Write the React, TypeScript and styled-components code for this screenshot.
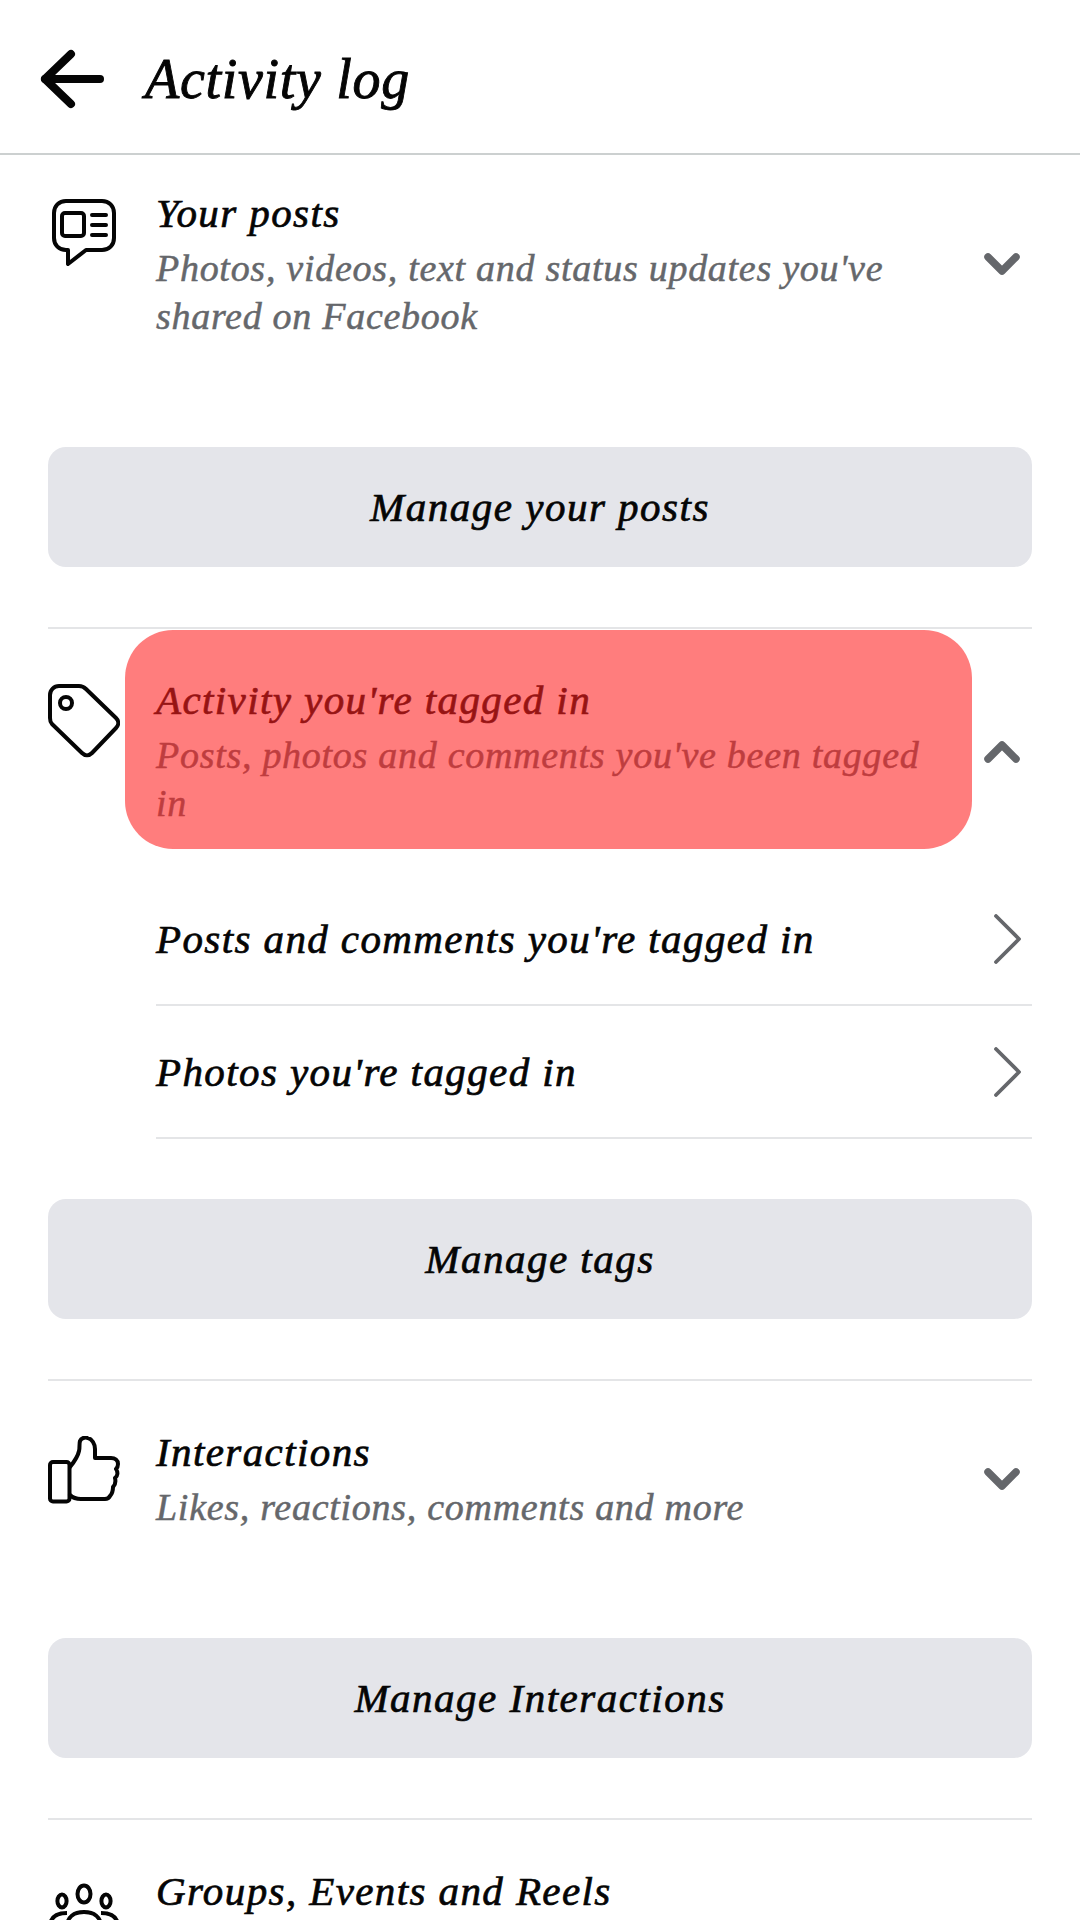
import styled, { createGlobalStyle } from "styled-components";

const GlobalStyle = createGlobalStyle`
    html, body {
        margin: 0;
        padding: 0;
        background: #fff;
    }

    * {
        box-sizing: border-box;
    }
`

const Page = styled.div`
    width: 1080px;
    height: 1920px;
    overflow: hidden;
    background: #fff;
    font-family: "Liberation Serif", serif;
    font-style: italic;
    color: #050505;
`

const Header = styled.header`
    display: flex;
    align-items: center;
    height: 155px;
    padding: 4px 0 0 40px;
    gap: 41px;
    border-bottom: 2px solid #ccd0d0;

    h1 {
        margin: 0;
        font-size: 56px;
        font-weight: 400;
        letter-spacing: 0.7px;
        -webkit-text-stroke: 0.9px #050505;
    }
`

const Section = styled.section<{ $first?: boolean; $last?: boolean }>`
    position: relative;
    margin: 0 48px;
    padding: ${(p) => (p.$first ? "31px" : "44px")} 0 60px;
    border-bottom: ${(p) => (p.$last ? "none" : "2px solid #e4e5e7")};
`

const Head = styled.div<{ $open?: boolean }>`
    display: flex;
    align-items: flex-start;
    margin-bottom: ${(p) => (p.$open ? "46px" : "107px")};
`

const IconSlot = styled.div<{ $dx?: number; $dy?: number }>`
    flex: 0 0 108px;
    height: 70px;
    padding-top: ${(p) => 11 + (p.$dy ?? 0)}px;
    padding-left: ${(p) => p.$dx ?? 0}px;
    line-height: 0;
`

const HeadText = styled.div`
    flex: 1;
    min-width: 0;
`

const Title = styled.div`
    height: 54px;
    line-height: 54px;
    font-size: 41px;
    letter-spacing: 1.4px;
    white-space: nowrap;
    -webkit-text-stroke: 0.7px #050505;
`

const Sub = styled.div`
    width: 790px;
    margin-top: 4px;
    font-size: 38px;
    line-height: 48px;
    letter-spacing: 0.72px;
    color: #65676b;
    -webkit-text-stroke: 0.5px #65676b;
`

const ChevronSlot = styled.div`
    align-self: center;
    flex: 0 0 48px;
    margin: 2px 0 0 -26px;
    line-height: 0;
`

const Rows = styled.div`
    margin-left: 108px;
    margin-bottom: 60px;
`

const Row = styled.div`
    display: flex;
    align-items: center;
    justify-content: space-between;
    height: 133px;
    padding-right: 11px;
    border-bottom: 2px solid #e4e5e7;
    font-size: 41px;
    letter-spacing: 1.4px;
    -webkit-text-stroke: 0.7px #050505;
`

const ManageButton = styled.div`
    display: flex;
    align-items: center;
    justify-content: center;
    height: 120px;
    border-radius: 18px;
    background: #e4e5ea;
    font-size: 41px;
    letter-spacing: 1.5px;
    -webkit-text-stroke: 0.7px #050505;
`

// red highlight laid over the tagged section heading
const Highlight = styled.div`
    position: absolute;
    top: 1px;
    left: 77px;
    width: 847px;
    height: 219px;
    border-radius: 48px;
    background: rgba(255, 31, 31, 0.58);
`

const ArrowBack = () => (
    <svg width="64" height="60" viewBox="0 0 64 60" fill="none" stroke="#050505" strokeWidth="8" strokeLinecap="round" strokeLinejoin="round">
        <path d="M5 30H60" />
        <path d="M31 5L5 30L31 55" />
    </svg>
)

const PostsIcon = () => (
    <svg width="66" height="70" viewBox="0 0 66 70" fill="none" stroke="#050505" strokeWidth="4" strokeLinecap="round" strokeLinejoin="round">
        <path d="M14 2H50C57 2 62 7 62 14V39C62 46 57 51 50 51H34L16 65V51H14C7 51 2 46 2 39V14C2 7 7 2 14 2Z" />
        <rect x="10" y="14" width="22" height="23" rx="3" />
        <path d="M40 16H54M40 26H54M40 36H54" />
    </svg>
)

const TagIcon = () => (
    <svg width="72" height="74" viewBox="0 0 72 74" fill="none" stroke="#050505" strokeWidth="4" strokeLinejoin="round">
        <path d="M11 2H31C34 2 36 3 38 5L68 34C71 37 71 41 68 44L44 69C41 72 37 72 34 69L4 40C2 38 2 36 2 34V11C2 6 6 2 11 2Z" />
        <circle cx="18" cy="19" r="6" />
    </svg>
)

const ThumbIcon = () => (
    <svg width="72" height="68" viewBox="0 0 72 68" fill="none" stroke="#050505" strokeWidth="4" strokeLinejoin="round" strokeLinecap="round">
        <rect x="2" y="26" width="19.5" height="39.5" rx="3" />
        <path d="M22 31C26 26 30 20 31 15C32 11 31 8 32 5C33 2 37 1 40 2C44 3 47 8 47 13V22H63C67 22 70 24 70 28C70 31 69 32 68 33C70 36 70 40 67 42C68 46 67 49 65 51C65 55 64 58 62 60C61 62 60 63 57 63H33C29 63 25 62 22 59" />
    </svg>
)

const GroupIcon = () => (
    <svg width="72" height="60" viewBox="0 0 72 60" fill="none" stroke="#050505" strokeWidth="4">
        <ellipse cx="14" cy="18" rx="4.6" ry="6.4" />
        <ellipse cx="36" cy="11" rx="6.5" ry="8.5" />
        <ellipse cx="58" cy="18" rx="4.6" ry="6.4" />
        <path d="M2 44C2 34 8 30 19 30M70 44C70 34 64 30 53 30" />
        <path d="M19 44C19 34 26 29 36 29C46 29 53 34 53 44" />
    </svg>
)

const ChevronBold = ({ up }: { up?: boolean }) => (
    <svg width="36" height="24" viewBox="0 0 36 24" fill="none" stroke="#65676b" strokeWidth="7.5" strokeLinecap="round" strokeLinejoin="round">
        <path d={up ? "M4 20L18 6L32 20" : "M4 5L18 19L32 5"} />
    </svg>
)

const ChevronRight = () => (
    <svg width="28" height="50" viewBox="0 0 28 50" fill="none" stroke="#65676b" strokeWidth="3.8" strokeLinecap="round" strokeLinejoin="round">
        <path d="M3 2L26 25L3 48" />
    </svg>
)

export default function App() {
    const taggedRows = ["Posts and comments you're tagged in", "Photos you're tagged in"]

    return (
        <Page>
            <GlobalStyle />
            <Header>
                <ArrowBack />
                <h1>Activity log</h1>
            </Header>

            <Section $first>
                <Head>
                    <IconSlot $dx={4} $dy={2}><PostsIcon /></IconSlot>
                    <HeadText>
                        <Title>Your posts</Title>
                        <Sub>Photos, videos, text and status updates you've shared on Facebook</Sub>
                    </HeadText>
                    <ChevronSlot><ChevronBold /></ChevronSlot>
                </Head>
                <ManageButton>Manage your posts</ManageButton>
            </Section>

            <Section>
                <Head $open>
                    <IconSlot><TagIcon /></IconSlot>
                    <HeadText>
                        <Title>Activity you're tagged in</Title>
                        <Sub>Posts, photos and comments you've been tagged in</Sub>
                    </HeadText>
                    <ChevronSlot><ChevronBold up /></ChevronSlot>
                </Head>
                <Highlight />
                <Rows>
                    {taggedRows.map((row, index) => (
                        <Row key={index}>
                            {row}
                            <ChevronRight />
                        </Row>
                    ))}
                </Rows>
                <ManageButton>Manage tags</ManageButton>
            </Section>

            <Section>
                <Head>
                    <IconSlot><ThumbIcon /></IconSlot>
                    <HeadText>
                        <Title>Interactions</Title>
                        <Sub>Likes, reactions, comments and more</Sub>
                    </HeadText>
                    <ChevronSlot><ChevronBold /></ChevronSlot>
                </Head>
                <ManageButton>Manage Interactions</ManageButton>
            </Section>

            <Section $last>
                <Head>
                    <IconSlot $dy={8}><GroupIcon /></IconSlot>
                    <HeadText>
                        <Title>Groups, Events and Reels</Title>
                    </HeadText>
                </Head>
            </Section>
        </Page>
    )
}
